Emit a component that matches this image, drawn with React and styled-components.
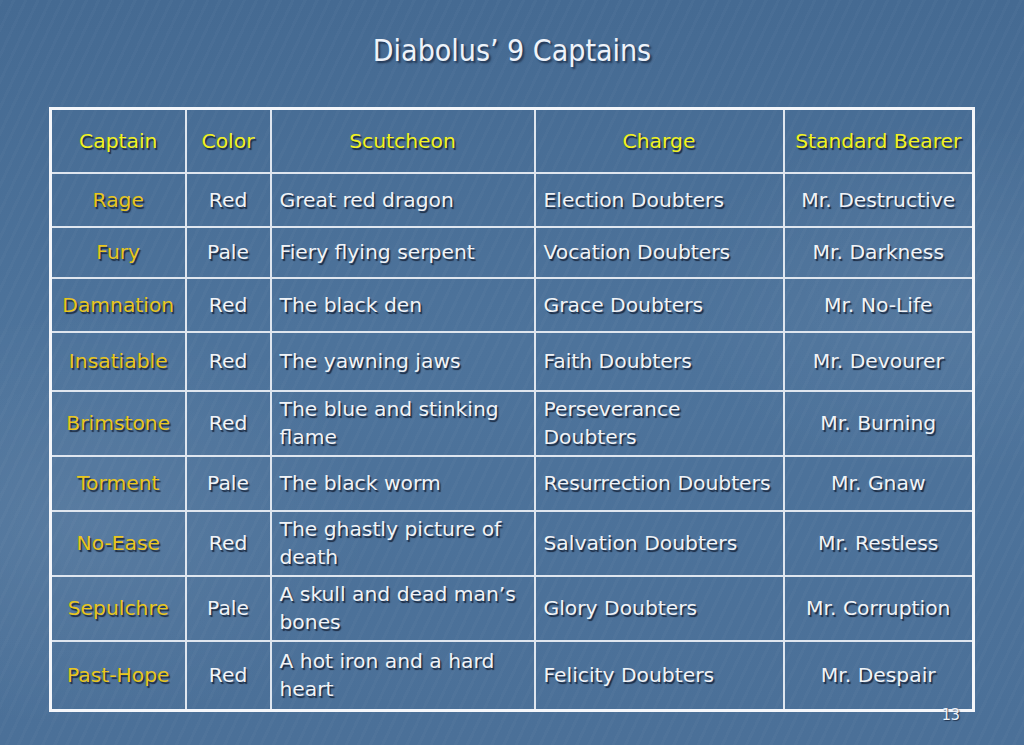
import React from "react";
import styled, { createGlobalStyle } from "styled-components";

const GlobalStyle = createGlobalStyle`
  html, body {
    margin: 0;
    padding: 0;
  }
  body {
    font-family: "DejaVu Sans", sans-serif;
  }
`;

const captains = [
  ["Rage", "Red", "Great red dragon", "Election Doubters", "Mr. Destructive", 54],
  ["Fury", "Pale", "Fiery flying serpent", "Vocation Doubters", "Mr. Darkness", 51],
  ["Damnation", "Red", "The black den", "Grace Doubters", "Mr. No-Life", 54],
  ["Insatiable", "Red", "The yawning jaws", "Faith Doubters", "Mr. Devourer", 59],
  ["Brimstone", "Red", "The blue and stinking flame", "Perseverance\nDoubters", "Mr. Burning", 65],
  ["Torment", "Pale", "The black worm", "Resurrection Doubters", "Mr. Gnaw", 55],
  ["No-Ease", "Red", "The ghastly picture of death", "Salvation Doubters", "Mr. Restless", 65],
  ["Sepulchre", "Pale", "A skull and dead man’s bones", "Glory Doubters", "Mr. Corruption", 65],
  ["Past-Hope", "Red", "A hot iron and a hard heart", "Felicity Doubters", "Mr. Despair", 70],
];

function App() {
  return (
    <>
      <GlobalStyle />
      <Slide>
        <Title>Diabolus’ 9 Captains</Title>
        <TableWrap>
          <Table>
            <colgroup>
              <col style={{ width: 135 }} />
              <col style={{ width: 85 }} />
              <col style={{ width: 264 }} />
              <col style={{ width: 249 }} />
              <col style={{ width: 190 }} />
            </colgroup>
            <thead>
              <Row $height={64}>
                <Head>Captain</Head>
                <Head>Color</Head>
                <Head>Scutcheon</Head>
                <Head>Charge</Head>
                <Head>Standard Bearer</Head>
              </Row>
            </thead>
            <tbody>
              {captains.map(([name, color, scutcheon, charge, bearer, h]) => (
                <Row key={name} $height={h}>
                  <Name>{name}</Name>
                  <Cell>{color}</Cell>
                  <Cell $left>{scutcheon}</Cell>
                  <Cell $left>{charge}</Cell>
                  <Cell>{bearer}</Cell>
                </Row>
              ))}
            </tbody>
          </Table>
          <PageNum>13</PageNum>
        </TableWrap>
      </Slide>
    </>
  );
}

export default App;

const Slide = styled.div`
  width: 1024px;
  height: 745px;
  box-sizing: border-box;
  padding-top: 32px;
  overflow: hidden;
  background-color: #4c7199;
  background-image:
    radial-gradient(ellipse 420px 300px at 8% 70%, rgba(255, 255, 255, 0.07), transparent 70%),
    radial-gradient(ellipse 380px 260px at 92% 40%, rgba(255, 255, 255, 0.05), transparent 70%),
    repeating-linear-gradient(
      115deg,
      rgba(255, 255, 255, 0.025) 0px,
      rgba(255, 255, 255, 0.025) 3px,
      transparent 3px,
      transparent 11px
    ),
    linear-gradient(180deg, #456a92 0%, #4d739b 45%, #4b7098 100%);
`;

const Title = styled.h1`
  margin: 0;
  text-align: center;
  font-family: "DejaVu Sans Condensed", "DejaVu Sans", sans-serif;
  font-weight: normal;
  font-size: 30px;
  line-height: 37px;
  color: #eef3fa;
  text-shadow: 2px 2px 2px rgba(20, 35, 60, 0.75);
`;

const TableWrap = styled.div`
  position: relative;
  margin: 38px 0 0 49px;
  width: 923px;
`;

const Table = styled.table`
  width: 923px;
  table-layout: fixed;
  border-collapse: collapse;
  border: 3px solid #f4f6fa;
`;

const Row = styled.tr`
  height: ${(p) => p.$height}px;
`;

const baseCell = `
  box-sizing: border-box;
  border: 2px solid #dfe6ef;
  padding: 0 8px;
  font-family: "DejaVu Sans", sans-serif;
  font-size: 20.3px;
  line-height: 28px;
  white-space: pre-line;
  text-shadow: 1.5px 1.5px 1px rgba(15, 25, 45, 0.8);
`;

const Head = styled.th`
  ${baseCell}
  font-weight: normal;
  text-align: center;
  color: #f2f21e;
  white-space: nowrap;
  padding: 0 4px;
`;

const Cell = styled.td`
  ${baseCell}
  text-align: ${(p) => (p.$left ? "left" : "center")};
  color: #f1f3f6;
`;

const Name = styled.td`
  ${baseCell}
  text-align: center;
  color: #e9c61c;
  white-space: nowrap;
  padding: 0 2px;
`;

const PageNum = styled.div`
  position: absolute;
  right: 12px;
  top: 100%;
  margin-top: -6px;
  font-family: "DejaVu Sans Condensed", "DejaVu Sans", sans-serif;
  font-size: 16px;
  line-height: 18px;
  color: #eef3fa;
  text-shadow: 1px 1px 1px rgba(15, 25, 45, 0.7);
`;
